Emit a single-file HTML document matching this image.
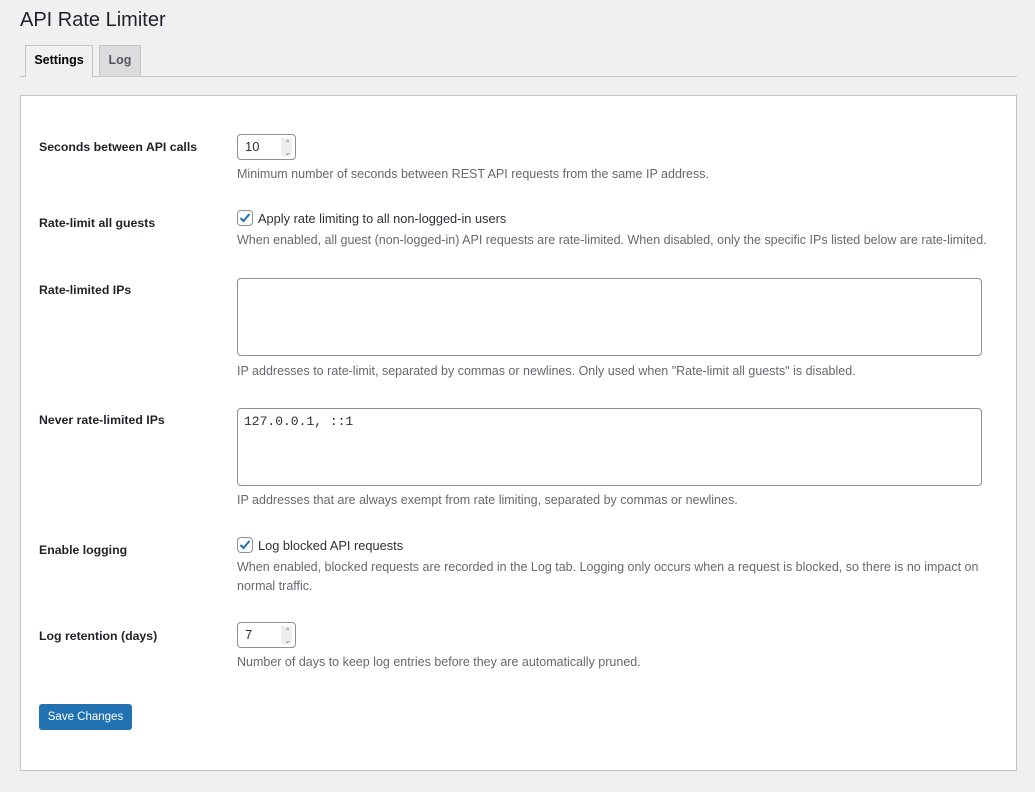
<!DOCTYPE html>
<html><head><style>
body{margin:0;width:1035px;height:792px;background:#f0f0f1;font-family:"Liberation Sans",sans-serif;color:#1d2327;position:relative;overflow:hidden}
.a{position:absolute;white-space:nowrap}
h1{position:absolute;left:20px;top:9px;margin:0;font-size:20px;font-weight:400;color:#1d2327}
.tab{position:absolute;top:45px;height:31px;border:1px solid #c3c4c7;border-bottom:none;box-sizing:border-box;font-size:12.5px;font-weight:bold;text-align:center;line-height:29px}
.line{position:absolute;left:20px;top:76px;width:997px;height:1px;background:#c3c4c7}
.panel{position:absolute;left:20px;top:95px;width:997px;height:676px;background:#fff;border:1px solid #c3c4c7;box-sizing:border-box}
.lbl{position:absolute;left:39px;font-size:12.3px;font-weight:bold;color:#1d2327;white-space:nowrap}
.d{position:absolute;left:237px;font-size:12.5px;color:#646970;white-space:nowrap}
.t{position:absolute;left:258px;font-size:12.8px;color:#2c3338;white-space:nowrap}
.num{position:absolute;left:237px;width:59px;height:26px;border:1px solid #8c8f94;border-radius:4px;box-sizing:border-box;font-size:13px;line-height:24px;padding-left:7px;color:#2c3338}
.num:after{content:"";position:absolute;right:3px;top:3px;width:11px;height:18px;background:#eee;border-radius:2px}
.num span{position:absolute;right:4px;top:0;font-size:8px;line-height:9px;color:#777;z-index:1;padding-top:4px}
.cb{position:absolute;left:237px;width:16px;height:16px;border:1px solid #8c8f94;border-radius:4px;box-sizing:border-box}
.ta{position:absolute;left:237px;width:745px;height:78px;border:1px solid #8c8f94;border-radius:4px;box-sizing:border-box}
.btn{position:absolute;left:39px;top:704px;width:93px;height:26px;background:#2271b1;border-radius:3px;color:#fff;font-size:11.5px;text-align:center;line-height:27px}
</style></head><body>
<h1>API Rate Limiter</h1>
<div class="line"></div>
<div class="tab" style="left:25px;width:68px;background:#f0f0f1;height:32px;color:#000">Settings</div>
<div class="tab" style="left:99px;width:42px;background:#dcdcde;color:#50575e">Log</div>
<div class="panel"></div>
<div class="lbl" style="top:140px">Seconds between API calls</div>
<div class="num" style="top:134px">10<span>⌃<br>⌄</span></div>
<div class="d" style="top:167px">Minimum number of seconds between REST API requests from the same IP address.</div>
<div class="lbl" style="top:216px">Rate-limit all guests</div>
<div class="cb" style="top:210px"><svg width="14" height="14" viewBox="0 0 14 14" style="position:absolute;left:0;top:0"><path d="M2.5 7l3 3 6-7" fill="none" stroke="#2271b1" stroke-width="2"/></svg></div>
<div class="t" style="top:211px">Apply rate limiting to all non-logged-in users</div>
<div class="d" style="top:233px">When enabled, all guest (non-logged-in) API requests are rate-limited. When disabled, only the specific IPs listed below are rate-limited.</div>
<div class="lbl" style="top:283px">Rate-limited IPs</div>
<div class="ta" style="top:278px"></div>
<div class="d" style="top:364px">IP addresses to rate-limit, separated by commas or newlines. Only used when "Rate-limit all guests" is disabled.</div>
<div class="lbl" style="top:413px">Never rate-limited IPs</div>
<div class="ta" style="top:408px"><div class="a" style="left:6px;top:5px;font-family:'Liberation Mono',monospace;font-size:13px;color:#2c3338">127.0.0.1, ::1</div></div>
<div class="d" style="top:493px">IP addresses that are always exempt from rate limiting, separated by commas or newlines.</div>
<div class="lbl" style="top:543px">Enable logging</div>
<div class="cb" style="top:537px"><svg width="14" height="14" viewBox="0 0 14 14" style="position:absolute;left:0;top:0"><path d="M2.5 7l3 3 6-7" fill="none" stroke="#2271b1" stroke-width="2"/></svg></div>
<div class="t" style="top:538px">Log blocked API requests</div>
<div class="d" style="top:560px">When enabled, blocked requests are recorded in the Log tab. Logging only occurs when a request is blocked, so there is no impact on</div>
<div class="d" style="top:579px">normal traffic.</div>
<div class="lbl" style="top:629px">Log retention (days)</div>
<div class="num" style="top:622px">7<span>⌃<br>⌄</span></div>
<div class="d" style="top:655px">Number of days to keep log entries before they are automatically pruned.</div>
<div class="btn">Save Changes</div>
</body></html>
